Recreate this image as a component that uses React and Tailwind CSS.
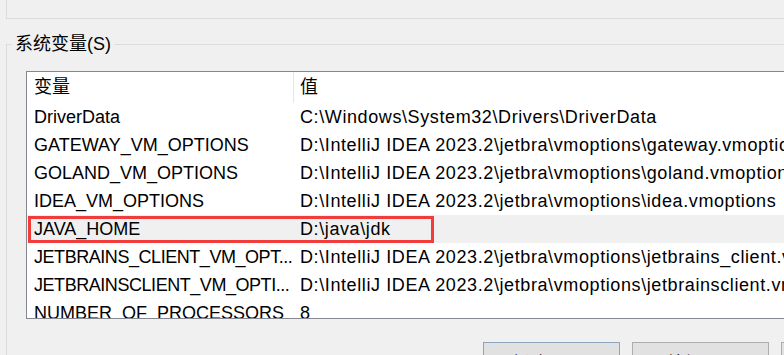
import React from "react";

const rows = [
  { name: "DriverData", value: "C:\\Windows\\System32\\Drivers\\DriverData" },
  { name: "GATEWAY_VM_OPTIONS", value: "D:\\IntelliJ IDEA 2023.2\\jetbra\\vmoptions\\gateway.vmoptions" },
  { name: "GOLAND_VM_OPTIONS", value: "D:\\IntelliJ IDEA 2023.2\\jetbra\\vmoptions\\goland.vmoptions" },
  { name: "IDEA_VM_OPTIONS", value: "D:\\IntelliJ IDEA 2023.2\\jetbra\\vmoptions\\idea.vmoptions" },
  { name: "JAVA_HOME", value: "D:\\java\\jdk", selected: true },
  { name: "JETBRAINS_CLIENT_VM_OPT...", value: "D:\\IntelliJ IDEA 2023.2\\jetbra\\vmoptions\\jetbrains_client.vmoptions", cut: true },
  { name: "JETBRAINSCLIENT_VM_OPTI...", value: "D:\\IntelliJ IDEA 2023.2\\jetbra\\vmoptions\\jetbrainsclient.vmoptions", cut: true },
  { name: "NUMBER_OF_PROCESSORS", value: "8" },
];

const App = () => {
  return (
    <div className="w-[784px] h-[355px] overflow-hidden bg-[#f0f0f0] text-[18px] text-black font-['Liberation_Sans','Noto_Sans_CJK_SC',sans-serif]">
      {/* user variables group (bottom edge only) */}
      <div className="h-[19px] ml-[6px] w-[900px] border-l border-b border-[#dcdcdc]" />

      {/* system variables group */}
      <div className="mt-[25px] ml-[6px] w-[900px] h-[400px] border-l border-t border-[#dcdcdc]">
        <div className="-mt-[11px] ml-[5px] px-[3px] w-fit h-[20px] leading-[20px] bg-[#f0f0f0]">
          系统变量(S)
        </div>

        <div className="mt-[17px] ml-[19px] w-[860px] h-[248px] border border-[#828790] bg-white overflow-hidden">
          {/* header */}
          <div className="flex h-[31px] items-center leading-[31px]">
            <div className="w-[266px] pl-[7px]">变量</div>
            <div className="w-px h-[31px] bg-[#e5e5e5]" />
            <div className="pl-[6px]">值</div>
          </div>

          {rows.map((row) => (
            <div
              key={row.name}
              className={`relative flex h-[28px] items-center leading-[28px] whitespace-nowrap ${
                row.selected ? "bg-[#f0f0f0]" : ""
              }`}
            >
              <div
                className={`w-[266px] shrink-0 pl-[7px] overflow-hidden ${
                  row.cut ? "tracking-[-0.45px]" : ""
                }`}
              >
                {row.name}
              </div>
              <div className="pl-[7px] tracking-[0.6px]">{row.value}</div>
              {row.selected && (
                <div className="absolute left-px top-px w-[406px] h-[27px] border-[3px] border-[#f23c3c]" />
              )}
            </div>
          ))}
        </div>

        {/* buttons */}
        <div className="mt-[23px] pl-[476px] flex gap-[12px]">
          <button className="w-[137px] h-[40px] shrink-0 pt-[4px] bg-[#e1e1e1] border border-[#8ca5bc] text-center leading-[27px]">
            新建(W)...
          </button>
          <button className="w-[137px] h-[40px] shrink-0 pt-[4px] bg-[#e1e1e1] border border-[#adadad] text-center leading-[27px]">
            编辑(I)...
          </button>
          <button className="w-[137px] h-[40px] shrink-0 pt-[4px] bg-[#e1e1e1] border border-[#adadad] text-center leading-[27px]">
            删除(L)
          </button>
        </div>
      </div>
    </div>
  );
};

export default App;
